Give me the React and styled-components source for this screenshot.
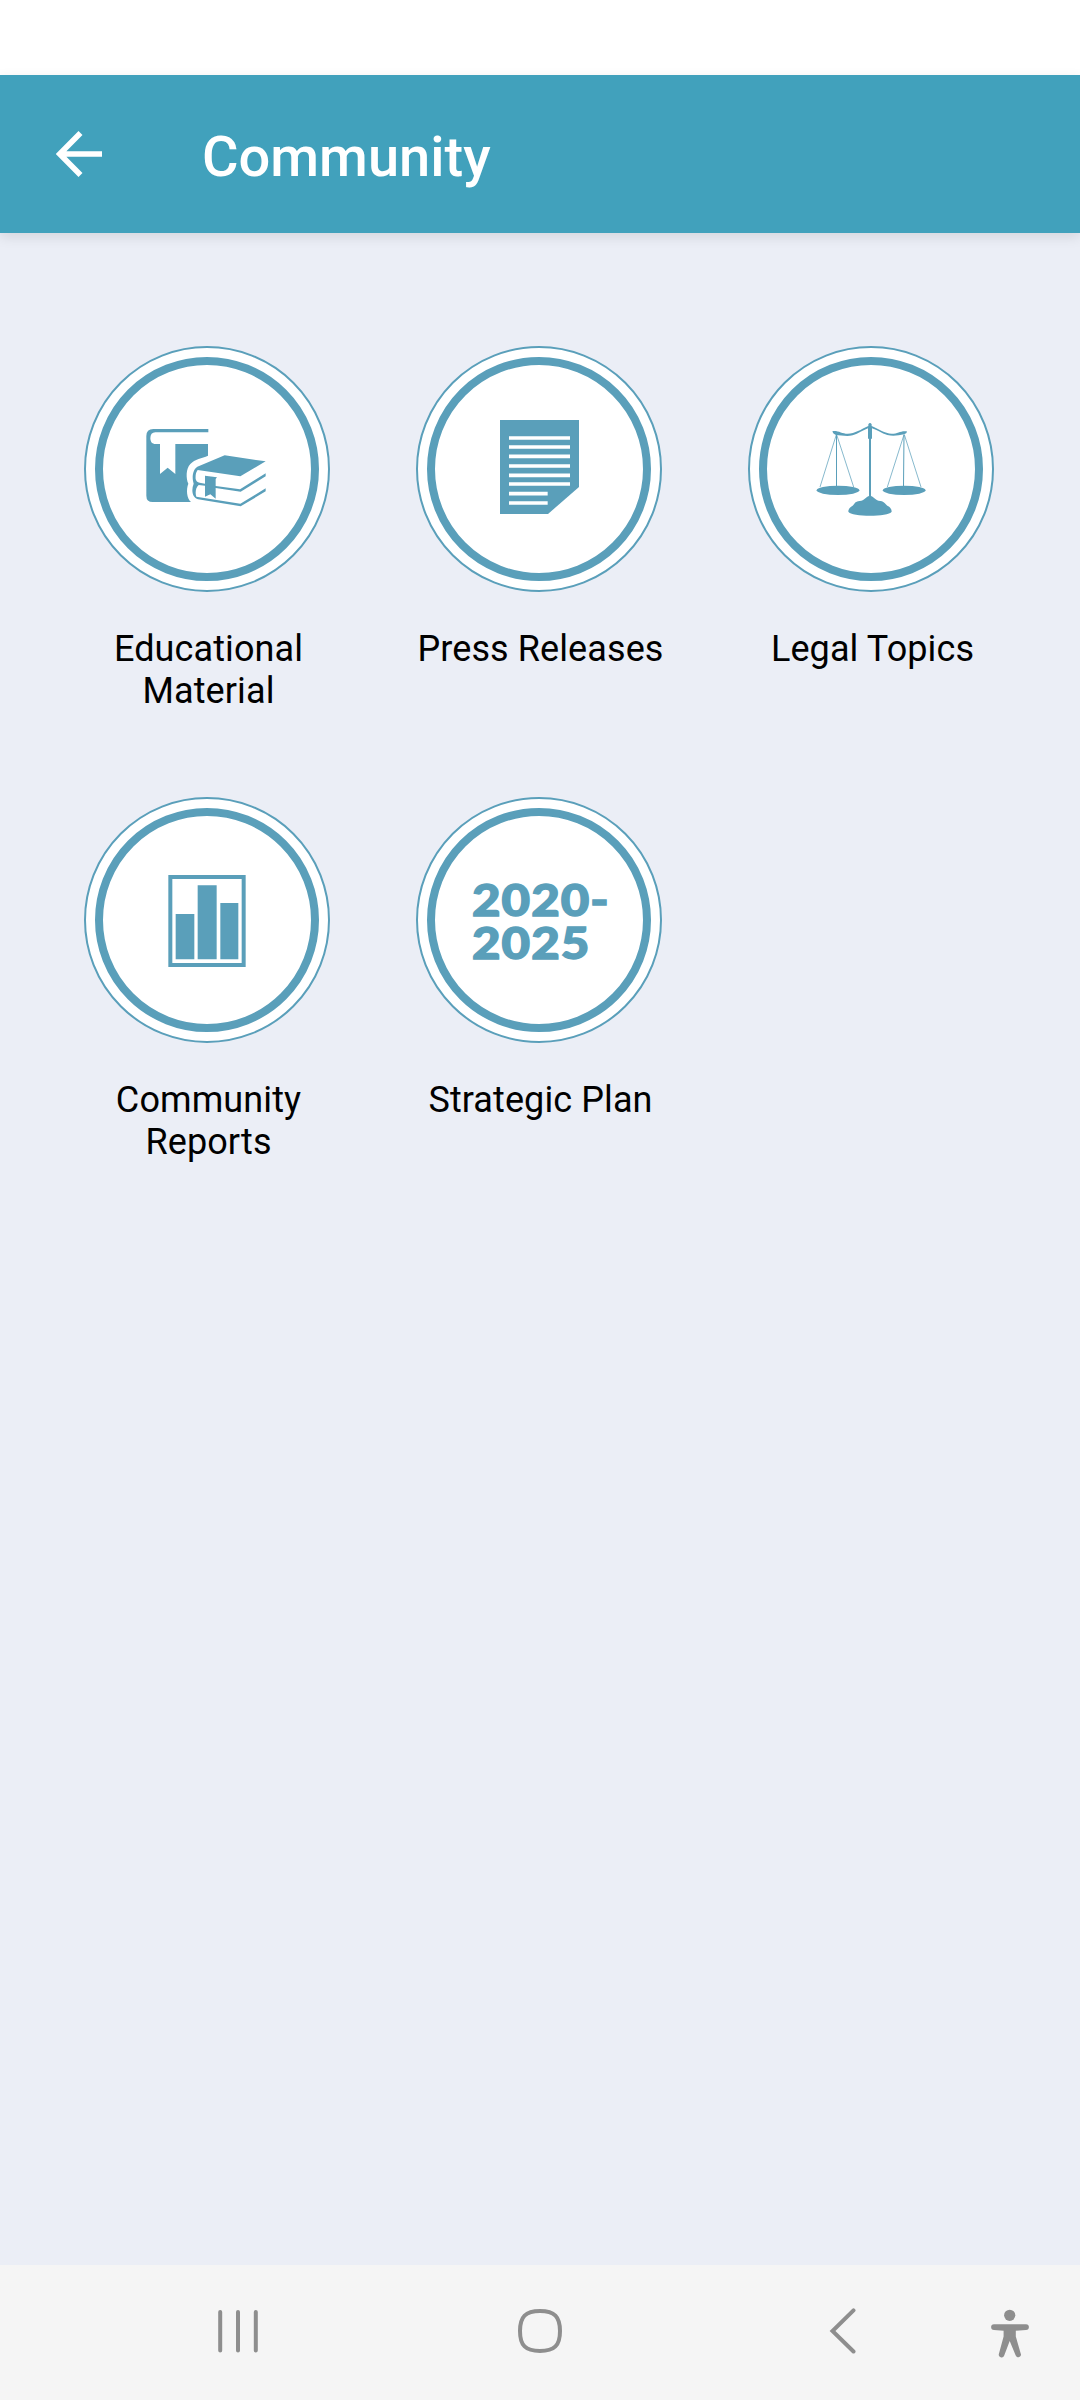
import React from 'react';
import styled, { createGlobalStyle } from 'styled-components';

function App() {
  return (
    <Screen>
      <GlobalStyle />
      <StatusBar />
      <Header>
        <BackArrow viewBox="0 0 48 48">
          <path d="M24.5 3 3.7 24l20.8 21M4.5 24H46" />
        </BackArrow>
        <Title>Community</Title>
      </Header>
      <Content>
        <Tile label="Educational Material"><BooksIcon /></Tile>
        <Tile label="Press Releases"><DocumentIcon /></Tile>
        <Tile label="Legal Topics"><ScalesIcon /></Tile>
        <Tile label="Community Reports"><ChartIcon /></Tile>
        <Tile label="Strategic Plan">
          <Years>2020-<br />2025</Years>
        </Tile>
      </Content>
      <NavBar>
        <NavButtons>
          <NavIcon viewBox="0 0 44 50">
            <path d="M4.2 4v38.4M22 4v38.4M39.8 4v38.4" />
          </NavIcon>
          <NavIcon viewBox="0 0 44 50">
            <path d="M22 3C36.5 3 42 8.5 42 23S36.5 43 22 43 2 37.5 2 23 7.5 3 22 3Z" />
          </NavIcon>
          <NavIcon viewBox="0 0 44 50">
            <path d="M33.5 2.300 12.5 23 33.5 43.5" />
          </NavIcon>
        </NavButtons>
        <NavIcon viewBox="0 0 44 50" $solid>
          <circle cx="21.7" cy="7.3" r="5.6" />
          <path d="M6 16.2H38a2.9 2.9 0 0 1 0 5.8L27.8 22.7V28.5L32.7 45.4A2.7 2.7 0 0 1 27.7 47.6L21.7 33 16.2 47.6A2.7 2.7 0 0 1 11 45.6L15.6 28.5V22.7L6 22a2.9 2.9 0 0 1 0-5.8Z" />
        </NavIcon>
      </NavBar>
    </Screen>
  );
}

function Tile({ label, children }) {
  return (
    <TileButton>
      <Disc>
        <Ring>{children}</Ring>
      </Disc>
      <Label>{label}</Label>
    </TileButton>
  );
}

function BooksIcon() {
  return (
    <Icon viewBox="99 105 624 624">
      <path
        fill="currentColor"
        d="M415 297H250Q229 297 229 318V497Q229 516 248 516H363C350 506 348 478 355 461C348 447 347 416 361 402C374 387 396 385 414 377V342H316V432L293 413 270 432V342H253Q241 340 241 325Q241 307 256 307H415Z"
      />
      <path fill="currentColor" d="M464 376 587 394 511 439 383 420C378 426 376 436 377 447C378 453 382 457 389 458L405 461V437L441 442 437 447V468L510 478 587 430V439L512 485 437 474V506L421 493 405 500V467L386 465C377 472 375 490 379 500L511 521 587 475V484L512 529 384 508C367 502 363 481 371 461C366 446 366 421 382 410Z" />
    </Icon>
  );
}

function DocumentIcon() {
  return (
    <Icon viewBox="105 105 624 624">
      <path fill="currentColor" d="M300 270H537V471L444 552H300Z" />
      <path
        stroke="#fff"
        strokeWidth="11"
        d="M327 324H510M327 351H510M327 379H510M327 408H510M327 436H510M327 462H510M327 491H443M327 519H443"
      />
    </Icon>
  );
}

function ScalesIcon() {
  return (
    <Icon viewBox="111 105 624 624">
      <path
        fill="currentColor"
        d="M415 283Q420 275 425 283V288C447 298 464 310 485 311 504 311 513 301 530 304Q533 309 522 313C506 316 490 320 472 315 454 310 442 300 426 295V326H423V498C433 501 436 512 451 513 466 515 466 525 475 529 482 533 485 539 485 545 480 553 450 557 420 557 390 557 360 553 355 545 355 537 360 532 367 528 374 522 374 514 389 513 404 512 406 501 417 498V326H414V295C398 301 386 311 368 316 350 320 334 316 316 314Q306 309 308 303C325 301 336 311 353 311 375 311 393 298 415 288Z"
      />
      <ellipse cx="324" cy="481" rx="64" ry="14" fill="currentColor" />
      <ellipse cx="522.5" cy="481" rx="64" ry="14" fill="currentColor" />
      <path stroke="currentColor" strokeWidth="2.2" d="M319 314 270 471M320 314 371 471M522 314 472 471M523 314 573 471" />
      <path stroke="currentColor" strokeWidth="3" d="M319.5 314V468M522 314 520.5 468" />
    </Icon>
  );
}

function ChartIcon() {
  return (
    <Icon viewBox="99 108 624 624">
      <rect x="301" y="291" width="220" height="264" stroke="currentColor" strokeWidth="12" />
      <path fill="currentColor" d="M317 402H373V538H317ZM383 316H440V538H383ZM451 369H505V538H451Z" />
    </Icon>
  );
}

const GlobalStyle = createGlobalStyle`
  body {
    margin: 0;
    font-family: Roboto, sans-serif;
    background-color: #ebeef6;
  }
`;

const Screen = styled.div`
  display: flex;
  flex-direction: column;
  width: 1080px;
  height: 2400px;
  overflow: hidden;
`;

const StatusBar = styled.div`
  height: 75px;
  background-color: #fff;
`;

const Header = styled.header`
  display: flex;
  align-items: center;
  height: 158px;
  box-sizing: border-box;
  padding-left: 56px;
  background-color: #41a1bc;
  box-shadow: 0 4px 12px rgba(0, 0, 0, 0.1);
  color: #fff;
`;

const BackArrow = styled.svg`
  width: 48px;
  height: 48px;
  fill: none;
  stroke: currentColor;
  stroke-width: 5.6px;
`;

const Title = styled.h1`
  margin: 5px 0 0 98px;
  font-size: 56px;
  font-weight: 500;
  line-height: 66px;
`;

const Content = styled.main`
  display: grid;
  grid-template-columns: repeat(3, 332px);
  grid-auto-rows: 451px;
  flex: 1;
  align-content: start;
  padding: 113px 0 0 41px;
`;

const TileButton = styled.div`
  display: flex;
  flex-direction: column;
  align-items: center;
`;

const Disc = styled.div`
  display: flex;
  align-items: center;
  justify-content: center;
  box-sizing: border-box;
  width: 246px;
  height: 246px;
  border: 2px solid #5a9fba;
  border-radius: 50%;
  background-color: #fff;
`;

const Ring = styled.div`
  display: flex;
  align-items: center;
  justify-content: center;
  box-sizing: border-box;
  width: 224px;
  height: 224px;
  border: 8px solid #5a9fba;
  border-radius: 50%;
  color: #5a9fba;
`;

const Icon = styled.svg`
  width: 208px;
  height: 208px;
  fill: none;
`;

const Years = styled.div`
  margin: 1px 0 0 4px;
  font-family: Lato, sans-serif;
  font-size: 43.5px;
  font-weight: 900;
  line-height: 42.5px;
  letter-spacing: 0.9px;
  white-space: nowrap;
  transform: scaleX(1.13);
  -webkit-text-stroke: 1.4px currentColor;
`;

const Label = styled.div`
  width: 260px;
  margin-top: 36px;
  padding-left: 3px;
  color: #000;
  font-size: 36px;
  line-height: 42px;
  letter-spacing: 0.1px;
  text-align: center;
`;

const NavBar = styled.nav`
  display: flex;
  justify-content: space-between;
  height: 135px;
  box-sizing: border-box;
  padding: 43px 48px 0 216px;
  background-color: #f5f5f5;
  color: #8e8e8e;
`;

const NavButtons = styled.div`
  display: flex;
  gap: 258px;
`;

const NavIcon = styled.svg`
  width: 44px;
  height: 50px;
  fill: ${({ $solid }) => ($solid ? 'currentColor' : 'none')};
  stroke: ${({ $solid }) => ($solid ? 'none' : 'currentColor')};
  stroke-width: 4px;
  stroke-linecap: round;
`;

export default App;
